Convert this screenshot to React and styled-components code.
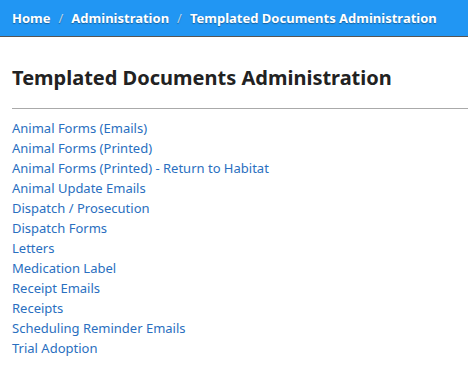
import React from "react";
import styled, { createGlobalStyle } from "styled-components";

const Global = createGlobalStyle`
  html, body { margin: 0; padding: 0; background: #fff; }
  body { font-family: "Noto Sans", "Open Sans", sans-serif; }
`;

const Bar = styled.nav`
  display: flex;
  align-items: center;
  height: 36px;
  padding: 0 12px;
  background: #2196f3;
  border-bottom: 1px solid #555;
  font-size: 13px;
  font-weight: 700;
  color: #fff;
  text-shadow: 0 1px 1px rgba(0,0,0,0.35);
  gap: 8px;
`;

const Crumb = styled.span`
  color: #fff;
`;

const Sep = styled.span`
  color: rgba(255,255,255,0.7);
  font-weight: 400;
`;

const Main = styled.main`
  padding: 0 0 0 12px;
`;

const Title = styled.h1`
  margin: 0;
  padding: 27px 0 0;
  font-size: 20px;
  font-weight: 700;
  color: #222;
  line-height: 28px;
`;

const Rule = styled.hr`
  margin: 16px 0 9px;
  border: 0;
  border-top: 1px solid #aaa;
`;

const List = styled.ul`
  list-style: none;
  margin: 0;
  padding: 0;
`;

const Item = styled.li`
  line-height: 20px;
  font-size: 13px;
`;

const Link = styled.a`
  color: #2a6fc0;
  text-decoration: none;
`;

const items = [
  "Animal Forms (Emails)",
  "Animal Forms (Printed)",
  "Animal Forms (Printed) - Return to Habitat",
  "Animal Update Emails",
  "Dispatch / Prosecution",
  "Dispatch Forms",
  "Letters",
  "Medication Label",
  "Receipt Emails",
  "Receipts",
  "Scheduling Reminder Emails",
  "Trial Adoption",
];

export default function App() {
  return (
    <>
      <Global />
      <Bar>
        <Crumb>Home</Crumb>
        <Sep>/</Sep>
        <Crumb>Administration</Crumb>
        <Sep>/</Sep>
        <Crumb>Templated Documents Administration</Crumb>
      </Bar>
      <Main>
        <Title>Templated Documents Administration</Title>
        <Rule />
        <List>
          {items.map((t) => (
            <Item key={t}>
              <Link href="#">{t}</Link>
            </Item>
          ))}
        </List>
      </Main>
    </>
  );
}
